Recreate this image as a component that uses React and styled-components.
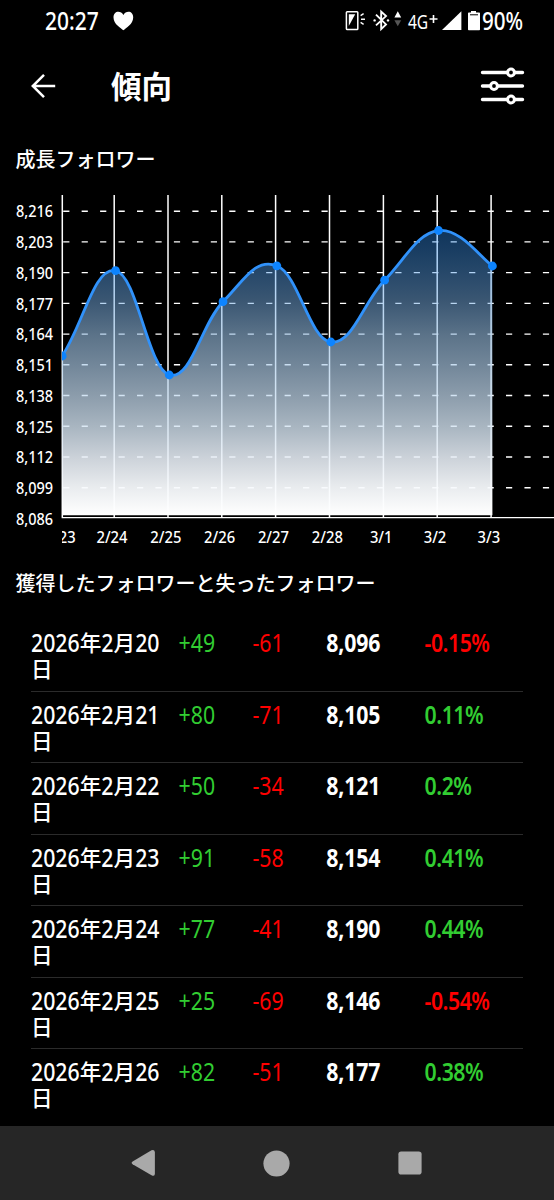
import React from "react";
import styled, { createGlobalStyle } from "styled-components";

const Global = createGlobalStyle`
  * { box-sizing: border-box; }
  html, body { margin: 0; background: #000; }
  body {
    color: #fff;
    font-family: "Noto Sans", "Noto Sans CJK JP", sans-serif;
    overflow: hidden;
  }
  svg { display: block; flex: none; }
`;

const Screen = styled.div`
  width: 554px;
  height: 1200px;
  background: #000;
  display: flex;
  flex-direction: column;
  overflow: hidden;
`;

/* Latin digits set taller than the kana/kanji beside them */
const Tall = styled.span`
  display: inline-block;
  font-family: "Noto Sans", sans-serif;
  font-size: ${(p) => p.$size || 21.3}px;
  font-weight: ${(p) => p.$weight || 500};
  letter-spacing: ${(p) => p.$spacing || 0}px;
  line-height: inherit;
  white-space: nowrap;
  transform: translateY(${(p) => p.$shift || 0}px) scaleY(${(p) => p.$stretch || 1.19});
`;

const StatusBar = styled.header`
  height: 42px;
  padding: 0 31px 0 45px;
  display: flex;
  align-items: center;
  justify-content: space-between;
  line-height: 40px;
  flex: none;
`;

const StatusGroup = styled.div`
  display: flex;
  align-items: center;
  gap: ${(p) => p.$gap || 0}px;
`;

const Network = styled.div`
  display: flex;
  width: 32px;
`;

const Plus = styled.svg`
  margin: 13px 0 0 1px;
`;

const TitleBar = styled.div`
  height: 88px;
  padding: 0 29px 0 30px;
  display: flex;
  align-items: center;
  flex: none;
`;

const Title = styled.h1`
  flex: 1;
  margin: -2px 0 0 55px;
  font: 700 30.5px/44px "Noto Sans CJK JP", sans-serif;
`;

const IconButton = styled.button`
  padding: 0;
  border: 0;
  background: none;
  color: #fff;
`;

const SectionTitle = styled.h2`
  flex: none;
  margin: 0;
  padding: 7px 0 0 15.5px;
  height: ${(p) => p.$height}px;
  font: 500 20px/${(p) => p.$height - 7}px "Noto Sans CJK JP", sans-serif;
`;

const ChartPanel = styled.section`
  height: 379px;
  flex: none;
  text {
    fill: #fff;
    font-family: "Noto Sans", sans-serif;
    font-weight: 500;
    font-size: 14.5px;
  }
`;

const Table = styled.div`
  margin: 20px 31px 0;
  flex: 1;
  min-height: 0;
  overflow: hidden;
`;

const Row = styled.div`
  height: 71.55px;
  padding-top: 9px;
  display: grid;
  grid-template-columns: 30% 15% 15% 20% 20%;
  border-bottom: 1px solid #2b2b2b;
  line-height: 26px;
  &:last-child { border-bottom: 0; }
`;

const DateCell = styled.div`
  font-family: "Noto Sans CJK JP", sans-serif;
  font-size: 21.6px;
  line-height: 25px;
  font-weight: 500;
  white-space: nowrap;
`;

const Cell = styled.div`
  color: ${(p) => p.$color || "#fff"};
`;

const NavBar = styled.nav`
  height: 74px;
  flex: none;
  padding: 0 132.500px 0 131px;
  background: #262626;
  color: #a9a9a9;
  display: flex;
  align-items: center;
  justify-content: space-between;
`;

const GREEN = "#32cd32";
const RED = "#ff0000";

const rows = [
  [20, "+49", "-61", "8,096", "-0.15%"],
  [21, "+80", "-71", "8,105", "0.11%"],
  [22, "+50", "-34", "8,121", "0.2%"],
  [23, "+91", "-58", "8,154", "0.41%"],
  [24, "+77", "-41", "8,190", "0.44%"],
  [25, "+25", "-69", "8,146", "-0.54%"],
  [26, "+82", "-51", "8,177", "0.38%"],
];

/* Chart geometry, in pixels of the chart panel */
const TOP = 180;
const points = [
  [8, 435], [62.2, 356], [115.5, 270.6], [169.3, 375], [223, 301.7], [276.8, 265.8],
  [330.8, 342], [384.6, 280.2], [438.5, 230.5], [492.4, 266],
].map(([x, y]) => [x, y - TOP]);

const k = 0.2;
const curve = points.reduce((d, p, i) => {
  if (i === 0) return `M${p[0]} ${p[1]}`;
  const a = points[i - 1];
  const before = points[i - 2] || a;
  const after = points[i + 1] || p;
  const c1 = [a[0] + (p[0] - before[0]) * k, a[1] + (p[1] - before[1]) * k];
  const c2 = [p[0] - (after[0] - a[0]) * k, p[1] - (after[1] - a[1]) * k];
  return `${d}C${c1} ${c2} ${p}`;
}, "");

const fade = [
  [0.02, "47,145,245", 0.38],
  [0.245, "116,172,228", 0.5],
  [0.37, "153,192,228", 0.6],
  [0.58, "194,217,238", 0.72],
  [0.69, "211,227,241", 0.8],
  [0.8, "232,239,247", 0.88],
  [0.9, "247,250,253", 0.94],
  [1, "255,255,255", 1],
];

const days = ["2/23", "2/24", "2/25", "2/26", "2/27", "2/28", "3/1", "3/2", "3/3"];
const lineX = [62.3, 114.2, 168, 221.8, 275.6, 329.5, 383.4, 437.2, 491.1];
const levels = ["8,216", "8,203", "8,190", "8,177", "8,164", "8,151", "8,138", "8,125", "8,112", "8,099", "8,086"];

function Chart() {
  return (
    <svg width="554" height="379" viewBox="0 0 554 379">
      <defs>
        <linearGradient id="area" gradientUnits="userSpaceOnUse" x1="0" x2="0" y1="50" y2="335">
          {fade.map(([at, rgb, alpha]) => (
            <stop key={at} offset={at} stopColor={`rgb(${rgb})`} stopOpacity={alpha} />
          ))}
        </linearGradient>
        <clipPath id="plot"><rect x="62" y="0" width="492" height="379" /></clipPath>
      </defs>
      {levels.slice(0, 10).map((v, i) => (
        <line key={v} x1="63.2" x2="554" y1={31.2 + i * 30.72} y2={31.2 + i * 30.72}
          stroke="#fff" strokeWidth="1.4" strokeDasharray="6.2 12.25" />
      ))}
      {lineX.map((x) => (
        <line key={x} x1={x} x2={x} y1="15" y2="337" stroke="#fff" strokeWidth="1.5" />
      ))}
      <path d="M61.6 337.6H554" stroke="#fff" strokeWidth="1.4" />
      <g clipPath="url(#plot)">
        <path d={`${curve}V335.2H8Z`} fill="url(#area)" />
        <path d={curve} fill="none" stroke="#3192fa" strokeWidth="2.8" />
        {points.slice(1).map(([x, y]) => <circle key={x} cx={x} cy={y} r="4.4" fill="#0d84ff" />)}
        {days.map((d, i) => (
          <text key={d} textAnchor="middle" transform={`translate(${lineX[i] - 2.2} 363.2) scale(1.02 1.17)`}>{d}</text>
        ))}
      </g>
      {levels.map((v, i) => (
        <text key={v} textAnchor="end" transform={`translate(53 ${37.3 + i * 30.75}) scale(1 1.17)`}>{v}</text>
      ))}
    </svg>
  );
}

function StatusIcons() {
  return (
    <svg width="63" height="24" viewBox="346 10 63 24" fill="none" stroke="#fff">
      <rect x="347.4" y="12.7" width="11.4" height="17.8" rx=".8" strokeWidth="1.5" />
      <path d="M349.8 15.2h6.4l-6.4 11.8z" fill="#fff" stroke="none" />
      <path d="M361.6 16.6l3-2M362 20.3h4M361.6 23.3l3 2" strokeWidth="1.4" />
      <path d="M377 15.6l10 9.8-4.8 4.7V12.6l4.8 4.5L377 26.4" strokeWidth="1.9" />
      <circle cx="375.6" cy="21.4" r="1.2" fill="#fff" stroke="none" />
      <circle cx="389" cy="21.4" r="1.2" fill="#fff" stroke="none" />
      <path d="M398.8 12.3l3.4 6.3h-6.8z" fill="#fff" stroke="none" />
      <path d="M398.8 27.3l3.4-6h-6.8z" fill="#555" stroke="none" />
    </svg>
  );
}

export default function App() {
  return (
    <Screen>
      <Global />
      <StatusBar>
        <StatusGroup $gap={14}>
          <Tall $size={21} $shift={-1}>20:27</Tall>
          <svg width="21" height="20" viewBox="0 0 21 20" fill="#fff">
            <path d="M10.4 19.3C8 17 .5 13 .5 6.4.5 2.8 2.8.8 5.3.8c2 0 4 1.1 5.1 3.2C11.5 1.9 13.5.8 15.5.8c2.5 0 4.7 2 4.7 5.6 0 6.6-7.4 10.6-9.8 12.9z" />
          </svg>
        </StatusGroup>
        <StatusGroup>
          <StatusIcons />
          <Network>
            <Tall $size={15.6} $weight={400} $stretch={1.25}>4G</Tall>
            <Plus width="9" height="10" viewBox="0 0 9 10" stroke="#fff" strokeWidth="1.6">
              <path d="M.5 5h8M4.5 1v8" />
            </Plus>
          </Network>
          <svg width="42" height="24" viewBox="441 10 42 24" fill="#fff">
            <path d="M462.4 12.2V31H443z" />
            <path d="M472 12h5v1.5h3.2q.8 0 .8.8v16.2q0 .8-.8.8h-10.4q-.8 0-.8-.8V14.3q0-.8.8-.8H472z" />
            <path d="M471 15.8h8" stroke="#000" strokeWidth="1" />
          </svg>
          <Tall $size={20.6} $shift={-0.5}>90%</Tall>
        </StatusGroup>
      </StatusBar>

      <TitleBar>
        <IconButton aria-label="back">
          <svg width="26" height="26" viewBox="0 0 26 26" fill="none" stroke="currentColor" strokeWidth="2.5">
            <path d="M25.2 13H2.5M14 1.8L2.8 13 14 24.2" />
          </svg>
        </IconButton>
        <Title>傾向</Title>
        <IconButton aria-label="filter">
          <svg width="45" height="38" viewBox="0 0 45 38" fill="#000" stroke="currentColor" strokeWidth="3.4" strokeLinecap="round">
            <path d="M2.5 5.5h40M2.5 19h40M2.5 32.5h40" />
            <circle cx="31" cy="5.5" r="3.4" strokeWidth="3" />
            <circle cx="14" cy="19" r="3.4" strokeWidth="3" />
            <circle cx="31" cy="32.5" r="3.4" strokeWidth="3" />
          </svg>
        </IconButton>
      </TitleBar>

      <SectionTitle $height={50}>成長フォロワー</SectionTitle>
      <ChartPanel><Chart /></ChartPanel>
      <SectionTitle $height={41}>獲得したフォロワーと失ったフォロワー</SectionTitle>

      <Table>
        {rows.map(([day, gained, lost, total, pct]) => (
          <Row key={day}>
            <DateCell>
              <Tall $shift={-0.5}>2026</Tall>年<Tall $shift={-0.5}>2</Tall>月<Tall $shift={-0.5}>{day}</Tall><br />日
            </DateCell>
            <Cell $color={GREEN}><Tall $weight={400}>{gained}</Tall></Cell>
            <Cell $color={RED}><Tall $weight={400}>{lost}</Tall></Cell>
            <Cell><Tall $weight={700} $spacing={-0.15}>{total}</Tall></Cell>
            <Cell $color={pct[0] === "-" ? RED : GREEN}><Tall $weight={600} $spacing={-0.5}>{pct}</Tall></Cell>
          </Row>
        ))}
      </Table>

      <NavBar>
        <svg width="25" height="28" viewBox="0 0 25 28" fill="currentColor">
          <path d="M1.6 12.4L20.5 1.3Q23.9 0 23.9 3.5V24.5Q23.9 28 20.5 26.3L1.6 15.2Q-.4 13.8 1.6 12.4z" />
        </svg>
        <svg width="27" height="27" viewBox="0 0 27 27" fill="currentColor"><circle cx="13.5" cy="13.5" r="13.1" /></svg>
        <svg width="24" height="24" viewBox="0 0 24 24" fill="currentColor"><rect x=".4" y=".4" width="23.2" height="23.2" rx="2.8" /></svg>
      </NavBar>
    </Screen>
  );
}
